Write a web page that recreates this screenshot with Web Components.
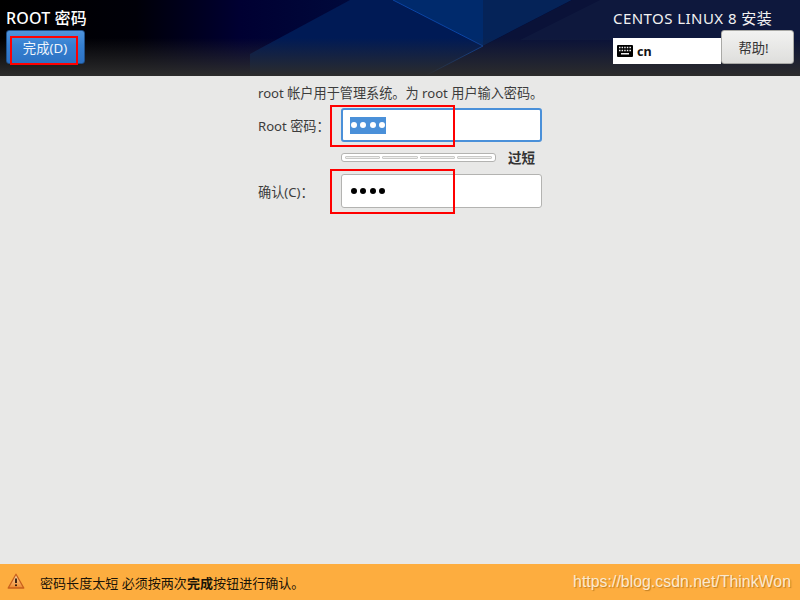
<!DOCTYPE html>
<html>
  <head>
    <title>Root password</title>
    <style>
      html, body { margin: 0; height: 100%; }
      body { font-family: "Noto Sans", "Noto Sans CJK SC", sans-serif; background: #e8e8e7; }
    </style>
    <script>
      const FONT = `"Noto Sans", "Noto Sans CJK SC", sans-serif`;

      class InstallerScreen extends HTMLElement {
        constructor() {
          super();
          this.attachShadow({ mode: 'open' }).innerHTML = `
            <style>
              :host { display: flex; flex-direction: column; width: 800px; height: 600px; overflow: hidden; font-family: ${FONT}; background: #e8e8e7; }
              main { flex: 1; }
            </style>
            <slot name="header"></slot>
            <main><slot></slot></main>
            <slot name="footer"></slot>
          `;
        }
      }

      class InstallerHeader extends HTMLElement {
        constructor() {
          super();
          this.attachShadow({ mode: 'open' }).innerHTML = `
            <style>
              :host { display: flex; justify-content: space-between; position: relative; height: 76px; box-sizing: border-box; padding: 9px 6px 0; color: #fff; background: #00001c; }
              svg.bg { position: absolute; inset: 0; width: 100%; height: 100%; }
              .left, .right { position: relative; }
              .left { display: flex; flex-direction: column; align-items: flex-start; gap: 3px; }
              h1 { margin: 0; font-size: 16px; line-height: 18px; font-weight: 500; letter-spacing: 0.15px; }
              .right { width: 181px; display: flex; flex-direction: column; }
              .product { font-size: 15px; line-height: 18px; letter-spacing: 0.45px; color: #f2f2f2; }
              .row { display: flex; align-items: flex-end; height: 37px; }
              .kbd { display: flex; align-items: center; gap: 4px; width: 108px; height: 26px; box-sizing: border-box; padding-left: 4px; background: #fff; color: #111; font-size: 12.5px; font-weight: 700; }
              .kbd svg { display: block; }
            </style>
            <svg class="bg" viewBox="0 0 800 76" preserveAspectRatio="none">
              <defs>
                <linearGradient id="fade" x1="0" y1="0" x2="0" y2="1">
                  <stop offset="0.5" stop-color="#2c2c2c" stop-opacity="0"/>
                  <stop offset="1" stop-color="#2c2c2c" stop-opacity="1"/>
                </linearGradient>
                <linearGradient id="base" x1="0" y1="0" x2="1" y2="0">
                  <stop offset="0" stop-color="#000000"/>
                  <stop offset="0.17" stop-color="#000008"/>
                  <stop offset="0.3" stop-color="#000032"/>
                  <stop offset="0.45" stop-color="#000a3c"/>
                </linearGradient>
              </defs>
              <rect width="800" height="76" fill="url(#base)"/>
              <polygon points="350,0 393,0 483,46 425,76 250,76 250,54" fill="#001a55"/>
              <polygon points="393,0 483,0 483,46" fill="#002a6c"/>
              <polygon points="483,0 572,0 483,46" fill="#052358"/>
              <polygon points="572,0 800,0 800,76 425,76 483,46" fill="#0a1238"/>
              <polygon points="600,0 800,0 800,40 520,40" fill="#101b40" opacity="0.7"/>
              <polyline points="393,0 483,46 425,76" fill="none" stroke="#0b46a6" stroke-width="1"/>
              <rect width="800" height="76" fill="url(#fade)"/>
            </svg>
            <div class="left">
              <h1>ROOT 密码</h1>
              <slot name="action"></slot>
            </div>
            <div class="right">
              <div class="product">CENTOS LINUX 8 安装</div>
              <div class="row">
                <div class="kbd">
                  <svg width="16" height="12" viewBox="0 0 16 12">
                    <rect width="16" height="12" rx="1" fill="#000"/>
                    <path d="M2 2.5h1.5M4.6 2.5h1.5M7.2 2.5h1.5M9.8 2.5h1.5M12.4 2.5h1.6M2 5.5h1.5M4.6 5.5h1.5M7.2 5.5h1.5M9.8 5.5h1.5M12.4 5.5h1.6M4 8.8h8" stroke="#eee" stroke-width="1.5" fill="none"/>
                  </svg>
                  <span>cn</span>
                </div>
                <slot name="help"></slot>
              </div>
            </div>
          `;
        }
      }

      class TopButton extends HTMLElement {
        constructor() {
          super();
          this.attachShadow({ mode: 'open' }).innerHTML = `
            <style>
              :host { display: flex; align-items: center; justify-content: center; box-sizing: border-box; height: 34px; border-radius: 3px; font-size: 13.3px; }
              :host([kind="primary"]) { width: 79px; padding-right: 1px; color: #eef4fb; background: linear-gradient(#4f94dc, #357fd0 45%, #2c72c4); border: 1px solid #1f4f88; }
              :host([kind="plain"]) { width: 73px; padding-right: 8px; color: #333; background: linear-gradient(#f2f2f1, #dededc); border: 1px solid #a9a9a6; }
            </style>
            <slot></slot>
          `;
        }
      }

      class PasswordForm extends HTMLElement {
        constructor() {
          super();
          this.attachShadow({ mode: 'open' }).innerHTML = `
            <style>
              :host { display: block; padding: 9px 0 0 258px; font-size: 13.15px; color: #3c3c3c; }
              p { margin: 0 0 6px; line-height: 17px; }
              .grid { display: grid; grid-template-columns: 83px 201px 1fr; grid-template-rows: 34px 32px 34px; align-items: center; }
              .meter { display: flex; gap: 12px; align-items: center; grid-column: 2 / 4; padding-bottom: 2px; }
              b { font-size: 13.5px; color: #333; }
            </style>
            <p>root 帐户用于管理系统。为 root 用户输入密码。</p>
            <div class="grid">
              <label>Root 密码：</label>
              <password-field focused></password-field>
              <span></span>
              <span></span>
              <div class="meter"><strength-meter></strength-meter><b>过短</b></div>
              <label>确认(C)：</label>
              <password-field></password-field>
            </div>
          `;
        }
      }

      class PasswordField extends HTMLElement {
        constructor() {
          super();
          this.attachShadow({ mode: 'open' }).innerHTML = `
            <style>
              :host { display: flex; align-items: center; box-sizing: border-box; height: 34px; padding-left: 8px; background: #fff; border: 1px solid #b3b3b1; border-radius: 3px; color: #000; }
              :host([focused]) { border: 2px solid #4a90d9; padding-left: 7px; }
              :host([focused]) span { background: #4a90d9; color: #fff; }
              span { display: flex; align-items: center; gap: 3.3px; height: 17px; padding: 0 1px; box-sizing: border-box; width: 36px; }
              i { flex: none; width: 6px; height: 6px; border-radius: 50%; background: currentColor; }
            </style>
            <span><i></i><i></i><i></i><i></i></span>
          `;
        }
      }

      class StrengthMeter extends HTMLElement {
        constructor() {
          super();
          this.attachShadow({ mode: 'open' }).innerHTML = `
            <style>
              :host { display: flex; gap: 2px; width: 155px; height: 9px; box-sizing: border-box; padding: 2px 3px; background: #fff; border: 1px solid #b3b3b1; border-radius: 3px; }
              i { flex: 1; border: 1px solid #c9c9c7; border-radius: 1px; background: #efefee; }
            </style>
            <i></i><i></i><i></i><i></i>
          `;
        }
      }

      class WarningBar extends HTMLElement {
        constructor() {
          super();
          this.attachShadow({ mode: 'open' }).innerHTML = `
            <style>
              :host { display: flex; align-items: center; height: 36px; box-sizing: border-box; padding: 0 9px 0 7px; background: #fdad3f; color: #1a1408; font-size: 13.05px; }
              svg { display: block; margin: -3px 15px 0 0; }
              .msg { flex: 1; }
              .mark { font-family: "Liberation Sans", sans-serif; font-size: 15.9px; color: #fbe9cf; text-shadow: 1px 1px 1px rgba(120,70,0,0.45); }
            </style>
            <svg width="18" height="16" viewBox="0 0 18 16">
              <defs>
                <linearGradient id="tri" x1="0" y1="0" x2="0" y2="1">
                  <stop offset="0" stop-color="#fbd9a8"/>
                  <stop offset="1" stop-color="#f08a2c"/>
                </linearGradient>
              </defs>
              <path d="M9 1.2 16.8 15H1.2Z" fill="url(#tri)" stroke="#c8601c" stroke-width="1.3" stroke-linejoin="round"/>
              <path d="M9 5.5v4.5" stroke="#241008" stroke-width="1.7"/>
              <circle cx="9" cy="12.3" r="1" fill="#241008"/>
            </svg>
            <span class="msg"><slot></slot></span>
            <span class="mark">https://blog.csdn.net/ThinkWon</span>
          `;
        }
      }

      class RedMark extends HTMLElement {
        constructor() {
          super();
          this.attachShadow({ mode: 'open' }).innerHTML = `
            <style>
              :host { position: absolute; box-sizing: border-box; border: 2px solid #f00; pointer-events: none; }
            </style>
          `;
        }
      }

      [
        ['installer-screen', InstallerScreen],
        ['installer-header', InstallerHeader],
        ['top-button', TopButton],
        ['password-form', PasswordForm],
        ['password-field', PasswordField],
        ['strength-meter', StrengthMeter],
        ['warning-bar', WarningBar],
        ['red-mark', RedMark]
      ].forEach(([name, cls]) => customElements.define(name, cls));
    </script>
  </head>
  <body>
    <installer-screen>
      <installer-header slot="header">
        <top-button slot="action" kind="primary">完成(D)</top-button>
        <top-button slot="help" kind="plain">帮助!</top-button>
      </installer-header>
      <password-form></password-form>
      <warning-bar slot="footer">密码长度太短 必须按两次<b>完成</b>按钮进行确认。</warning-bar>
    </installer-screen>
    <red-mark style="left:10px;top:36px;width:68px;height:29px"></red-mark>
    <red-mark style="left:330px;top:105px;width:125px;height:42px"></red-mark>
    <red-mark style="left:330px;top:169px;width:125px;height:45px"></red-mark>
  </body>
</html>
